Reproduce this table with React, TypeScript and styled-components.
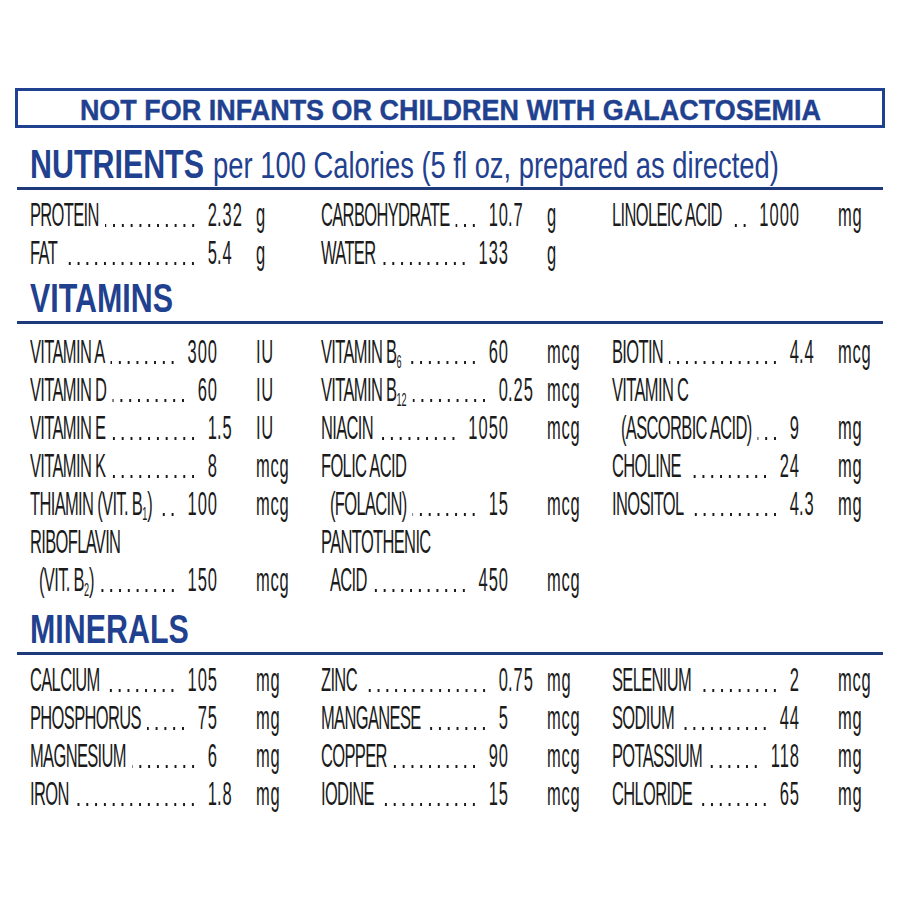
import styled, { createGlobalStyle } from 'styled-components';
import { Fragment, ReactNode } from 'react';

const BLUE = '#1f418f';
const RULE = '#1e3a7b';
const INK = '#1b1b1b';

// body text is drawn at double width and squeezed to half
const SQUEEZE = 0.5;

type Entry = {
  name: ReactNode;
  lead?: ReactNode;
  value: string;
  unit: string;
};

type Table = {
  title: string;
  note?: string;
  top: number;
  gap: number;
  columns: Entry[][];
};

const GlobalStyle = createGlobalStyle`
  html, body {
    margin: 0;
    padding: 0;
    background: #fff;
    overflow: hidden;
  }
  body {
    font-family: 'Liberation Sans', Arial, Helvetica, sans-serif;
    color: ${INK};
  }
`;

const Page = styled.main`
  width: 870px;
  margin: 0 15px;
  padding-top: 88px;
  overflow: hidden;
`;

const Banner = styled.div`
  height: 40px;
  box-sizing: border-box;
  border: 3px solid ${BLUE};
  padding-top: 4px;
  text-align: center;
  line-height: 30px;
  white-space: nowrap;
`;

const BannerText = styled.span`
  display: inline-block;
  font-size: 29px;
  font-weight: 700;
  color: ${BLUE};
  -webkit-text-stroke: 0.4px ${BLUE};
  transform: scaleX(0.93);
`;

const Heading = styled.h2<{ $top: number }>`
  margin: ${(p) => p.$top}px 0 0;
  padding-left: 15px;
  height: 40px;
  line-height: 40px;
  white-space: nowrap;
  font-size: 40px;
  font-weight: 700;
  color: ${BLUE};
`;

const HeadingInner = styled.span`
  display: inline-block;
  transform: scaleX(0.76);
  transform-origin: left center;
`;

const HeadingNote = styled.span`
  font-size: 36px;
  font-weight: 400;
  margin-left: 12px;
`;

const Rule = styled.hr`
  margin: 3px 2px 0;
  height: 3px;
  border: 0;
  background: ${RULE};
`;

const Grid = styled.div<{ $gap: number }>`
  width: ${870 / SQUEEZE}px;
  box-sizing: border-box;
  padding-left: ${15 / SQUEEZE}px;
  margin-top: ${(p) => p.$gap}px;
  display: grid;
  grid-template-columns: 582px 582px 1fr;
  transform: scaleX(${SQUEEZE});
  transform-origin: left top;
`;

const Column = styled.div`
  display: flex;
  flex-direction: column;
`;

const Line = styled.div`
  display: grid;
  grid-template-columns: 374px 78px auto;
  height: 38px;
  line-height: 38px;
  font-size: 33px;
  white-space: nowrap;
`;

const Lead = styled.div`
  display: flex;
  min-width: 0;
`;

const Name = styled.span<{ $indent?: boolean }>`
  letter-spacing: -1.3px;
  padding-left: ${(p) => (p.$indent ? 18 : 0)}px;
`;

// dotted leader, right-aligned so the last dot sits a fixed gap before the value
const Leader = styled.span`
  flex: 1;
  min-width: 0;
  margin: 0 18px 0 12px;
  background-image: linear-gradient(90deg, ${INK} 4px, transparent 4px);
  background-size: 17.6px 3px;
  background-repeat: repeat-x;
  background-position: right 13.6px top 27.5px;
`;

const Int = styled.span`
  letter-spacing: 2px;
  margin-right: -2px;
`;

const Frac = styled.span`
  letter-spacing: 2px;
`;

const Unit = styled.span`
  letter-spacing: 1.5px;
`;

const Sub = styled.sub`
  font-size: 0.55em;
  line-height: 0;
  vertical-align: -0.3em;
  letter-spacing: 0;
`;

const tables: Table[] = [
  {
    title: 'NUTRIENTS',
    note: 'per 100 Calories (5 fl oz, prepared as directed)',
    top: 16,
    gap: 6,
    columns: [
      [
        { name: 'PROTEIN', value: '2.32', unit: 'g' },
        { name: 'FAT', value: '5.4', unit: 'g' },
      ],
      [
        { name: 'CARBOHYDRATE', value: '10.7', unit: 'g' },
        { name: 'WATER', value: '133', unit: 'g' },
      ],
      [{ name: 'LINOLEIC ACID', value: '1000', unit: 'mg' }],
    ],
  },
  {
    title: 'VITAMINS',
    top: 6,
    gap: 9,
    columns: [
      [
        { name: 'VITAMIN A', value: '300', unit: 'IU' },
        { name: 'VITAMIN D', value: '60', unit: 'IU' },
        { name: 'VITAMIN E', value: '1.5', unit: 'IU' },
        { name: 'VITAMIN K', value: '8', unit: 'mcg' },
        {
          name: (
            <>
              THIAMIN (VIT. B<Sub>1</Sub>)
            </>
          ),
          value: '100',
          unit: 'mcg',
        },
        {
          name: 'RIBOFLAVIN',
          lead: (
            <>
              (VIT. B<Sub>2</Sub>)
            </>
          ),
          value: '150',
          unit: 'mcg',
        },
      ],
      [
        {
          name: (
            <>
              VITAMIN B<Sub>6</Sub>
            </>
          ),
          value: '60',
          unit: 'mcg',
        },
        {
          name: (
            <>
              VITAMIN B<Sub>12</Sub>
            </>
          ),
          value: '0.25',
          unit: 'mcg',
        },
        { name: 'NIACIN', value: '1050', unit: 'mcg' },
        { name: 'FOLIC ACID', lead: '(FOLACIN)', value: '15', unit: 'mcg' },
        { name: 'PANTOTHENIC', lead: 'ACID', value: '450', unit: 'mcg' },
      ],
      [
        { name: 'BIOTIN', value: '4.4', unit: 'mcg' },
        { name: 'VITAMIN C', lead: '(ASCORBIC ACID)', value: '9', unit: 'mg' },
        { name: 'CHOLINE', value: '24', unit: 'mg' },
        { name: 'INOSITOL', value: '4.3', unit: 'mg' },
      ],
    ],
  },
  {
    title: 'MINERALS',
    top: 10,
    gap: 6,
    columns: [
      [
        { name: 'CALCIUM', value: '105', unit: 'mg' },
        { name: 'PHOSPHORUS', value: '75', unit: 'mg' },
        { name: 'MAGNESIUM', value: '6', unit: 'mg' },
        { name: 'IRON', value: '1.8', unit: 'mg' },
      ],
      [
        { name: 'ZINC', value: '0.75', unit: 'mg' },
        { name: 'MANGANESE', value: '5', unit: 'mcg' },
        { name: 'COPPER', value: '90', unit: 'mcg' },
        { name: 'IODINE', value: '15', unit: 'mcg' },
      ],
      [
        { name: 'SELENIUM', value: '2', unit: 'mcg' },
        { name: 'SODIUM', value: '44', unit: 'mg' },
        { name: 'POTASSIUM', value: '118', unit: 'mg' },
        { name: 'CHLORIDE', value: '65', unit: 'mg' },
      ],
    ],
  },
];

function EntryLines({ entry }: { entry: Entry }) {
  const [int, frac] = entry.value.split('.');
  const label = entry.lead ?? entry.name;

  return (
    <>
      {entry.lead && (
        <Line>
          <Lead>
            <Name>{entry.name}</Name>
          </Lead>
        </Line>
      )}
      <Line>
        <Lead>
          <Name $indent={!!entry.lead}>{label}</Name>
          <Leader />
          <Int>{int}</Int>
        </Lead>
        <Frac>{frac ? `.${frac}` : ''}</Frac>
        <Unit>{entry.unit}</Unit>
      </Line>
    </>
  );
}

export default function App() {
  return (
    <>
      <GlobalStyle />
      <Page>
        <Banner>
          <BannerText>NOT FOR INFANTS OR CHILDREN WITH GALACTOSEMIA</BannerText>
        </Banner>

        {tables.map((table) => (
          <Fragment key={table.title}>
            <Heading $top={table.top}>
              <HeadingInner>
                {table.title}
                {table.note && <HeadingNote>{table.note}</HeadingNote>}
              </HeadingInner>
            </Heading>
            <Rule />
            <Grid $gap={table.gap}>
              {table.columns.map((col, i) => (
                <Column key={i}>
                  {col.map((entry, j) => (
                    <EntryLines key={j} entry={entry} />
                  ))}
                </Column>
              ))}
            </Grid>
          </Fragment>
        ))}
      </Page>
    </>
  );
}
